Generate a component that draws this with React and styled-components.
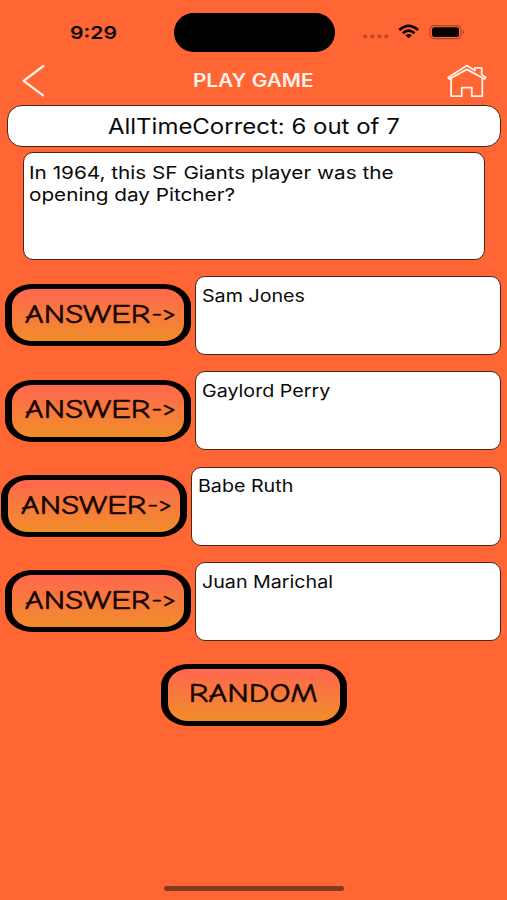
import React from "react";
import styled, { createGlobalStyle } from "styled-components";

const GlobalStyle = createGlobalStyle`
  *, *::before, *::after { box-sizing: border-box; }
  html, body { margin: 0; background: #ff6633; }
  button { font: inherit; color: inherit; background: none; border: 0; padding: 0; margin: 0; }
`;

const Screen = styled.main`
  width: 507px;
  height: 900px;
  display: flex;
  flex-direction: column;
  overflow: hidden;
  background: #ff6633;
  color: #0a0a0a;
  font-family: Inter, "Liberation Sans", sans-serif;
`;

/* Wide-set lettering: every label is stretched horizontally by its own factor. */
const Wide = styled.span`
  display: inline-block;
  white-space: nowrap;
  transform: scaleX(${(p) => p.$x});
  transform-origin: ${(p) => p.$from || "center"};
`;

const StatusBar = styled.div`
  height: 60px;
  flex: none;
  display: grid;
  grid-template-columns: 173.5px 161px 1fr;
`;

const Clock = styled.time`
  padding: 21px 0 0 69.5px;
  font-size: 17.6px;
  line-height: 23px;
  font-weight: 600;
`;

const Island = styled.div`
  height: 39px;
  margin-top: 12.5px;
  border-radius: 20px;
  background: #000;
`;

const StatusIcons = styled.div`
  display: flex;
  padding: 23px 0 0 28.5px;
`;

const NavBar = styled.header`
  height: 45px;
  flex: none;
  display: grid;
  grid-template-columns: 60px 1fr 60px;
  align-items: start;
`;

const NavButton = styled.button`
  display: flex;
  height: 45px;
  padding-top: 3px;
  padding-left: ${(p) => p.$left}px;
`;

const Title = styled.h1`
  margin: 9px 0 0;
  text-align: center;
  color: #fff0e9;
  font-size: 18px;
  line-height: 24px;
  font-weight: 600;
`;

const Panel = styled.section`
  background: #fff;
  border: 1.5px solid #4a2518;
  border-radius: 10px;
`;

const Score = styled(Panel)`
  height: 42px;
  flex: none;
  margin: 0 6.5px 0 7px;
  border-radius: 15px;
  text-align: center;
  font-size: 21.5px;
  line-height: 40px;
`;

const Question = styled(Panel)`
  height: 108px;
  flex: none;
  margin: 5px 22px 16.2px 22.5px;
  padding: 9px 5.5px;
  font-size: 17.9px;
  line-height: 21.5px;
`;

const AnswerList = styled.div`
  display: flex;
  flex-direction: column;
  gap: 16.3px;
`;

const AnswerRow = styled.div`
  height: 79px;
  display: flex;
  gap: 4.5px;
  padding-right: 6.5px;
  margin-left: ${(p) => (p.$shifted ? 0.5 : 4.5)}px;
`;

const AnswerText = styled(Panel)`
  flex: 1;
  padding: 8.5px 5.8px;
  font-size: 17px;
  line-height: 20px;
`;

const GameButton = styled.button`
  flex: none;
  width: 186px;
  height: 62px;
  margin-top: ${(p) => p.$top || 0}px;
  padding: 0 0 1px ${(p) => p.$indent || 0}px;
  border: solid #000;
  border-width: 5px 7px;
  border-radius: 27px / 22px;
  background: linear-gradient(#ff674f, #f08d2a) padding-box;
  color: #170500;
  font-family: "Comic Neue", "Comic Sans MS", Lato, sans-serif;
  font-size: 26px;
  line-height: 30px;
  -webkit-text-stroke: 0.5px #170500;
`;

/* The arrow sits a little higher and tighter than the letters beside it. */
const Arrow = styled.span`
  display: inline-block;
  margin-left: 1px;
  font-size: 21px;
  line-height: 20px;
  transform: translateY(-3px);
`;

const Footer = styled.footer`
  flex: 1;
  display: flex;
  flex-direction: column;
  justify-content: space-between;
  align-items: center;
  padding: 22.5px 0 9px;
`;

const HomeIndicator = styled.div`
  width: 180px;
  height: 5px;
  border-radius: 3px;
  background: #803b22;
`;

const answers = ["Sam Jones", "Gaylord Perry", "Babe Ruth", "Juan Marichal"];

function SystemIcons() {
  return (
    <StatusIcons>
      <svg width="104" height="18" viewBox="0 0 104 18">
        <g fill="#b74d2c">
          <circle cx="2.3" cy="13.5" r="2" />
          <circle cx="9.3" cy="13.5" r="2" />
          <circle cx="16.3" cy="13.5" r="2" />
          <circle cx="23.3" cy="13.5" r="2" />
        </g>
        <g fill="none" stroke="#100500" strokeWidth="2.7">
          <path d="M36.2 7.1 Q45.7 -1.4 55.2 7.1" />
          <path d="M39.8 10.3 Q45.7 5 51.6 10.3" />
        </g>
        <path d="M42.4 12.2 Q45.7 9.8 49 12.2 L45.7 15.2Z" fill="#100500" />
        <rect x="67" y="2.6" width="31" height="13" rx="4.3" fill="none" stroke="#a5472a" strokeWidth="1.1" />
        <rect x="69" y="4.2" width="27" height="9.8" rx="2.8" fill="#080200" />
        <path d="M99.8 6.9 Q102.6 9 99.8 11.1Z" fill="#a5472a" />
      </svg>
    </StatusIcons>
  );
}

function BackIcon() {
  return (
    <svg width="25" height="36" viewBox="0 0 25 36" fill="none" stroke="#fff3ed" strokeWidth="2.3">
      <path d="M22 2.5 L1.7 17.8 L21.7 32.8" />
    </svg>
  );
}

function HomeIcon() {
  return (
    <svg width="41" height="36" viewBox="0 0 41 36" fill="none" stroke="#fff0e8" strokeWidth="1.8" strokeLinejoin="round">
      <path d="M1.2 14.4 L19.9 2.6 L27.8 7.5 L27.8 4.8 L34.7 4.8 L34.7 11.8 L38.8 14.5 L37.5 16 L19.9 6.4 L2.4 16 Z" />
      <path d="M4.1 15.2 V33.2 H14.8 V24.6 H24.8 V33.2 H35.3 V15.2" />
    </svg>
  );
}

export default function App() {
  return (
    <>
      <GlobalStyle />
      <Screen>
        <StatusBar>
          <Clock><Wide $x={1.2} $from="left">9:29</Wide></Clock>
          <Island />
          <SystemIcons />
        </StatusBar>
        <NavBar>
          <NavButton $left={21.5} aria-label="Back"><BackIcon /></NavButton>
          <Title><Wide $x={1.155}>PLAY GAME</Wide></Title>
          <NavButton $left={0} aria-label="Home"><HomeIcon /></NavButton>
        </NavBar>
        <Score><Wide $x={1.115}>AllTimeCorrect: 6 out of 7</Wide></Score>
        <Question>
          <Wide $x={1.158} $from="left">
            In 1964, this SF Giants player was the
            <br />
            opening day Pitcher?
          </Wide>
        </Question>
        <AnswerList>
          {answers.map((name, i) => (
            <AnswerRow key={name} $shifted={i === 2}>
              <GameButton $top={8.3} $indent={6}>
                <Wide $x={1.25}>ANSWER<Arrow>-&gt;</Arrow></Wide>
              </GameButton>
              <AnswerText><Wide $x={1.157} $from="left">{name}</Wide></AnswerText>
            </AnswerRow>
          ))}
        </AnswerList>
        <Footer>
          <GameButton><Wide $x={1.26}>RANDOM</Wide></GameButton>
          <HomeIndicator />
        </Footer>
      </Screen>
    </>
  );
}
